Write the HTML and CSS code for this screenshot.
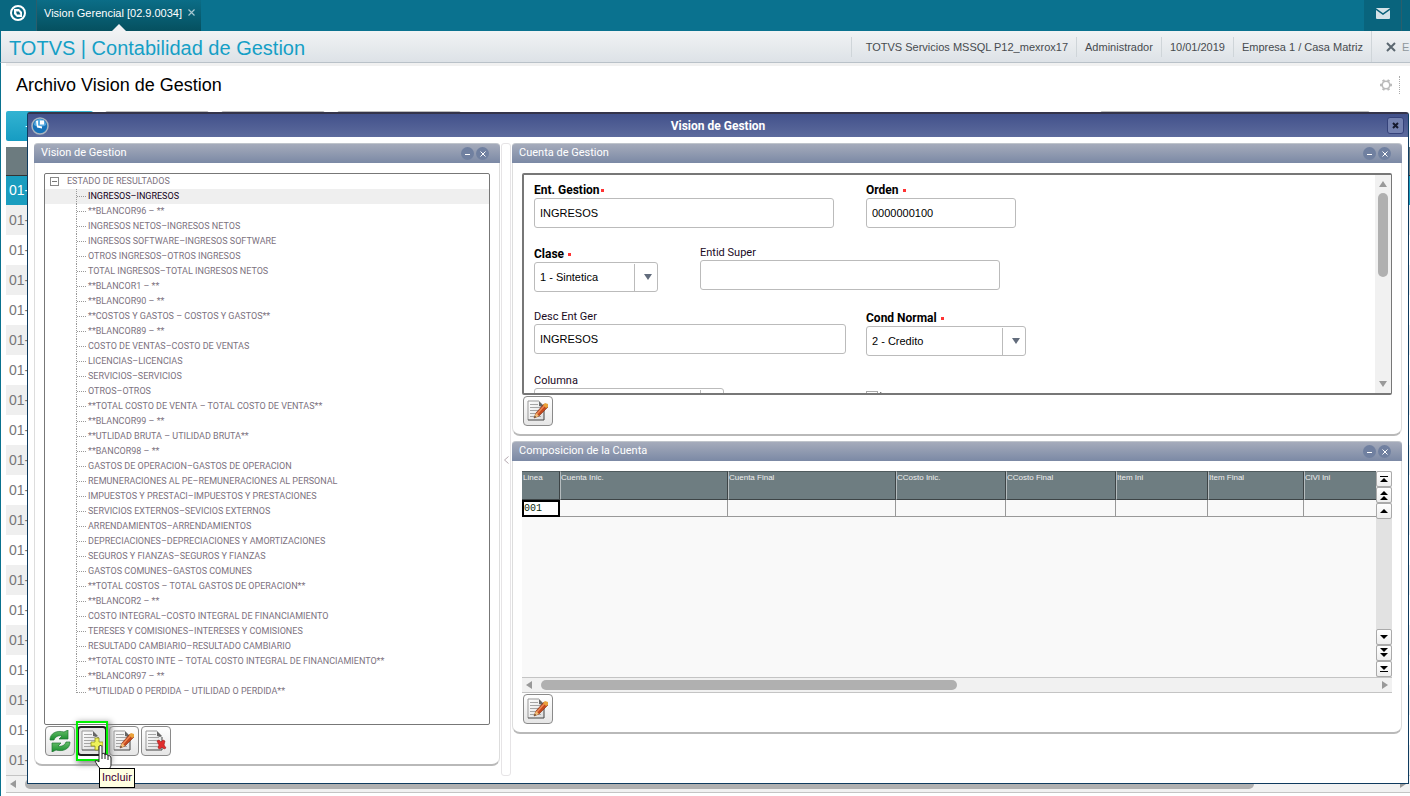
FILE: index.html
```html
<!DOCTYPE html>
<html lang="es">
<head>
  <meta charset="utf-8">
  <title>Vision Gerencial</title>
  <link rel="stylesheet" href="styles.css">
</head>
<body>

  <!-- shared icons -->
  <svg class="defs" width="0" height="0" aria-hidden="true">
    <defs>
      <linearGradient id="paper" x1="0" y1="0" x2="1" y2="1">
        <stop offset="0" stop-color="#fff"/><stop offset="1" stop-color="#dcdcdc"/>
      </linearGradient>
      <linearGradient id="leaf" x1="0" y1="0" x2="0" y2="1">
        <stop offset="0" stop-color="#67c06a"/><stop offset="1" stop-color="#168c2c"/>
      </linearGradient>
      <symbol id="doc" viewBox="0 0 22 22">
        <path d="M1 1h11l5 5v14H1z" fill="url(#paper)"/>
        <path d="M1 20V1h11" fill="none" stroke="#999"/>
        <path d="M1 20h16V7" fill="none" stroke="#444"/>
        <path d="M12 1l5 5-2 1-3-1z" fill="#666"/>
        <path d="M3 4.500h8M3 7.500h11M3 10.500h11M3 13.500h11M3 16.500h11" stroke="#a5a5a5"/>
      </symbol>
      <symbol id="edit" viewBox="0 0 22 22">
        <use href="#doc"/>
        <path d="M7 18l2-5 8-9 4 3-9 9z" fill="#c4481d" stroke="#7c2d12" stroke-width=".6"/>
        <path d="M9 14l8-9 1 1-8 9z" fill="#ee8a55"/>
        <path d="M16 5l2-2 3 1v3l-2 1z" fill="#e9a23b"/>
        <path d="M7 18l2-5 3 3z" fill="#f2c078"/>
        <path d="M7 18l1-2 1 1z" fill="#222"/>
      </symbol>
    </defs>
  </svg>

  <div class="topbar">
    <a class="home" href="#" aria-label="Inicio">
      <svg width="18" height="18" viewBox="0 0 18 18">
        <circle cx="9" cy="9" r="7" fill="none" stroke="#fff" stroke-width="2"/>
        <path d="M5 5h5l3 3v5H8l-3-3z" fill="#fff"/>
        <path d="M7 7.500h3l1.500 3H8z" fill="#0b5d74"/>
      </svg>
    </a>
    <div class="app-tab">
      <span>Vision Gerencial [02.9.0034]</span>
      <button class="tab-close" aria-label="Cerrar">
        <svg width="7" height="7" viewBox="0 0 7 7"><path d="M.5.500l6 6M6.500.500l-6 6" stroke="#a9c8d1" stroke-width="1.200"/></svg>
      </button>
    </div>
    <a class="mail" href="#" aria-label="Mensajes">
      <svg width="14" height="11" viewBox="0 0 14 11">
        <rect width="14" height="11" rx="1" fill="#d5e2e8"/>
        <path d="M0 1l7 5 7-5" fill="none" stroke="#0a6079" stroke-width="1.500"/>
      </svg>
    </a>
    <span class="bar-end"></span>
  </div>

  <div class="header">
    <h1>TOTVS | Contabilidad de Gestion</h1>
    <ul class="session">
      <li>TOTVS Servicios MSSQL P12_mexrox17</li>
      <li>Administrador</li>
      <li>10/01/2019</li>
      <li>Empresa 1 / Casa Matriz</li>
    </ul>
    <button class="exit">
      <svg width="10" height="10" viewBox="0 0 10 10"><path d="M1 1l8 8M9 1l-8 8" stroke="#5b6770" stroke-width="2"/></svg>
      <span>E</span>
    </button>
  </div>

  <div class="page">
    <div class="page-title">
      <h2>Archivo Vision de Gestion</h2>
      <button class="gear" aria-label="Configurar">
        <svg width="12" height="12" viewBox="0 0 12 12">
          <circle cx="6" cy="6" r="3.800" fill="none" stroke="#bbb" stroke-width="1.600"/>
          <path d="M10 6h2M8 9.500l1 1.700M4 9.500l-1 1.700M2 6H0M4 2.500L3 .8M8 2.500L9 .8" stroke="#bbb" stroke-width="2.400"/>
        </svg>
      </button>
    </div>

    <div class="actions">
      <button class="action primary">+</button>
      <button class="action" aria-label="Modificar"></button>
      <button class="action" aria-label="Visualizar"></button>
      <button class="action wide" aria-label="Otras acciones"></button>
      <button class="action search" aria-label="Buscar"></button>
    </div>

    <table class="records">
      <thead><tr><th></th></tr></thead>
      <tbody>
        <tr class="selected"><td>01-</td></tr>
        <tr><td>01-</td></tr>
        <tr><td>01-</td></tr>
        <tr><td>01-</td></tr>
        <tr><td>01-</td></tr>
        <tr><td>01-</td></tr>
        <tr><td>01-</td></tr>
        <tr><td>01-</td></tr>
        <tr><td>01-</td></tr>
        <tr><td>01-</td></tr>
        <tr><td>01-</td></tr>
        <tr><td>01-</td></tr>
        <tr><td>01-</td></tr>
        <tr><td>01-</td></tr>
        <tr><td>01-</td></tr>
        <tr><td>01-</td></tr>
        <tr><td>01-</td></tr>
        <tr><td>01-</td></tr>
        <tr><td>01-</td></tr>
        <tr><td>01-</td></tr>
      </tbody>
    </table>
    <div class="hscroll page-scroll">
      <i class="arrow left"></i><div class="track"><div class="thumb"></div></div><i class="arrow right"></i>
    </div>
  </div>

  <div class="window">
    <div class="titlebar">
      <svg class="logo" width="18" height="18" viewBox="0 0 18 18">
        <circle cx="9" cy="9" r="8" fill="#1672b8" stroke="#a9b4c0" stroke-width="1.500"/>
        <path d="M3 8a6 6 0 0 1 12 0c-3 2-9 2-12 0z" fill="#58abe0"/>
        <path d="M5 4l2-.5v5l4 1v2l-5-1zM9 3.500h4v4H9z" fill="#fff"/>
      </svg>
      <h2>Vision de Gestion</h2>
      <button class="win-close" aria-label="Cerrar">
        <svg width="7" height="7" viewBox="0 0 7 7"><path d="M1 1l5 5M6 1L1 6" stroke="#15192e" stroke-width="2"/></svg>
      </button>
    </div>

    <div class="window-body">
      <section class="panel tree-panel">
        <div class="panel-head">
          <h3>Vision de Gestion</h3>
          <button class="round" aria-label="Minimizar"><svg width="6" height="6" viewBox="0 0 6 6"><path d="M0 3.500h5" stroke="#fff"/></svg></button>
          <button class="round" aria-label="Cerrar"><svg width="6" height="6" viewBox="0 0 6 6"><path d="M.5.500l5 5M5.500.500l-5 5" stroke="#fff"/></svg></button>
        </div>
        <div class="panel-body">
          <div class="tree">
            <div class="root"><button class="toggle" aria-label="Contraer"></button>ESTADO DE RESULTADOS</div>
            <ul>
              <li class="current">INGRESOS–INGRESOS</li>
              <li>**BLANCOR96 – **</li>
              <li>INGRESOS NETOS–INGRESOS NETOS</li>
              <li>INGRESOS SOFTWARE–INGRESOS SOFTWARE</li>
              <li>OTROS INGRESOS–OTROS INGRESOS</li>
              <li>TOTAL INGRESOS–TOTAL INGRESOS NETOS</li>
              <li>**BLANCOR1 – **</li>
              <li>**BLANCOR90 – **</li>
              <li>**COSTOS Y GASTOS – COSTOS Y GASTOS**</li>
              <li>**BLANCOR89 – **</li>
              <li>COSTO DE VENTAS–COSTO DE VENTAS</li>
              <li>LICENCIAS–LICENCIAS</li>
              <li>SERVICIOS–SERVICIOS</li>
              <li>OTROS–OTROS</li>
              <li>**TOTAL COSTO DE VENTA – TOTAL COSTO DE VENTAS**</li>
              <li>**BLANCOR99 – **</li>
              <li>**UTLIDAD BRUTA – UTILIDAD BRUTA**</li>
              <li>**BANCOR98 – **</li>
              <li>GASTOS DE OPERACION–GASTOS DE OPERACION</li>
              <li>REMUNERACIONES AL PE–REMUNERACIONES AL PERSONAL</li>
              <li>IMPUESTOS Y PRESTACI–IMPUESTOS Y PRESTACIONES</li>
              <li>SERVICIOS EXTERNOS–SEVICIOS EXTERNOS</li>
              <li>ARRENDAMIENTOS–ARRENDAMIENTOS</li>
              <li>DEPRECIACIONES–DEPRECIACIONES Y AMORTIZACIONES</li>
              <li>SEGUROS Y FIANZAS–SEGUROS Y FIANZAS</li>
              <li>GASTOS COMUNES–GASTOS COMUNES</li>
              <li>**TOTAL COSTOS – TOTAL GASTOS DE OPERACION**</li>
              <li>**BLANCOR2 – **</li>
              <li>COSTO INTEGRAL–COSTO INTEGRAL DE FINANCIAMIENTO</li>
              <li>TERESES Y COMISIONES–INTERESES Y COMISIONES</li>
              <li>RESULTADO CAMBIARIO–RESULTADO CAMBIARIO</li>
              <li>**TOTAL COSTO INTE – TOTAL COSTO INTEGRAL DE FINANCIAMIENTO**</li>
              <li>**BLANCOR97 – **</li>
              <li>**UTILIDAD O PERDIDA – UTILIDAD O PERDIDA**</li>
            </ul>
          </div>
          <div class="tools">
            <button class="tool" aria-label="Actualizar">
              <svg width="22" height="22" viewBox="0 0 22 22" fill="url(#leaf)" stroke="#1c7430" stroke-width=".7">
                <path d="M1 10C1 3 8 0 15 2l4-2v9h-9l3-3C9 5 6 7 5 10z"/>
                <path d="M21 12c0 7-7 10-14 8l-4 2v-9h9l-3 3c4 1 7-1 8-4z"/>
              </svg>
            </button>
            <button class="tool active" aria-label="Incluir">
              <svg width="22" height="22" viewBox="0 0 22 22">
                <use href="#doc"/>
                <path d="M14 8h4v4h4v4h-4v4h-4v-4h-4v-4h4z" fill="#eff25a" stroke="#8f9218" stroke-width=".8"/>
              </svg>
              <svg class="cursor" width="20" height="28" viewBox="0 0 20 28">
                <path d="M6 14V3c0-2 3-2 3 0v7c1-1 3-1 3 1 1-1 3-1 3 1 1-1 3 0 3 2v6c0 4-2 6-7 6-4 0-7-5-9-9 1-1 3 0 4 1z" fill="#fff" stroke="#222"/>
                <path d="M9 10v5M12 11v4M15 12v4" stroke="#222"/>
              </svg>
              <span class="tooltip">Incluir</span>
            </button>
            <button class="tool" aria-label="Modificar"><svg width="22" height="22"><use href="#edit"/></svg></button>
            <button class="tool" aria-label="Borrar">
              <svg width="22" height="22" viewBox="0 0 22 22">
                <use href="#doc"/>
                <path d="M12 11l2-1 2 2 2-2 2 1-1 4 2 3-2 1-2-2-2 2-2-1 1-3z" fill="#e02c2c" stroke="#a11515" stroke-width=".6"/>
              </svg>
            </button>
          </div>
        </div>
      </section>

      <div class="splitter">
        <svg width="5" height="8" viewBox="0 0 5 8"><path d="M4.500.500L.5 4l4 3.500" fill="none" stroke="#b5a9b0"/></svg>
      </div>

      <div class="side">
        <section class="panel">
          <div class="panel-head">
            <h3>Cuenta de Gestion</h3>
            <button class="round" aria-label="Minimizar"><svg width="6" height="6" viewBox="0 0 6 6"><path d="M0 3.500h5" stroke="#fff"/></svg></button>
            <button class="round" aria-label="Cerrar"><svg width="6" height="6" viewBox="0 0 6 6"><path d="M.5.500l5 5M5.500.500l-5 5" stroke="#fff"/></svg></button>
          </div>
          <div class="panel-body">
            <div class="form-box">
              <form>
                <div class="field required span2">
                  <label for="ent">Ent. Gestion<b></b></label>
                  <input class="w300" id="ent" type="text" value="INGRESOS">
                </div>
                <div class="field required">
                  <label for="orden">Orden <b></b></label>
                  <input class="w150" id="orden" type="text" value="0000000100">
                </div>
                <div class="field required">
                  <label for="clase">Clase <b></b></label>
                  <span class="select w124"><select id="clase"><option>1 - Sintetica</option></select></span>
                </div>
                <div class="field span2">
                  <label for="super">Entid Super</label>
                  <input class="w300" id="super" type="text">
                </div>
                <div class="field span2">
                  <label for="desc">Desc Ent Ger</label>
                  <input class="w312" id="desc" type="text" value="INGRESOS">
                </div>
                <div class="field required">
                  <label for="cond">Cond Normal <b></b></label>
                  <span class="select w160"><select id="cond"><option>2 - Credito</option></select></span>
                </div>
                <div class="field span2">
                  <label for="columna">Columna</label>
                  <span class="select w190"><select id="columna"><option></option></select></span>
                </div>
                <div class="field check"><input type="checkbox" aria-label="Activa" checked></div>
              </form>
              <div class="vscroll">
                <i class="arrow up"></i><div class="track"><div class="thumb"></div></div><i class="arrow down"></i>
              </div>
            </div>
            <div class="tools">
              <button class="tool" aria-label="Modificar"><svg width="22" height="22"><use href="#edit"/></svg></button>
            </div>
          </div>
        </section>

        <section class="panel">
          <div class="panel-head">
            <h3>Composicion de la Cuenta</h3>
            <button class="round" aria-label="Minimizar"><svg width="6" height="6" viewBox="0 0 6 6"><path d="M0 3.500h5" stroke="#fff"/></svg></button>
            <button class="round" aria-label="Cerrar"><svg width="6" height="6" viewBox="0 0 6 6"><path d="M.5.500l5 5M5.500.500l-5 5" stroke="#fff"/></svg></button>
          </div>
          <div class="panel-body">
            <div class="grid-box">
              <div class="grid-main">
                <div class="grid-scroll">
                  <table class="grid">
                    <colgroup>
                      <col class="c-line"><col class="c-account"><col class="c-account"><col class="c-cost"><col class="c-cost"><col class="c-item"><col class="c-item-end"><col>
                    </colgroup>
                    <thead>
                      <tr><th>Linea</th><th>Cuenta Inic.</th><th>Cuenta Final</th><th>CCosto Inic.</th><th>CCosto Final</th><th>Item Ini</th><th>Item Final</th><th>ClVl Ini</th></tr>
                    </thead>
                    <tbody>
                      <tr><td class="focus">001</td><td></td><td></td><td></td><td></td><td></td><td></td><td></td></tr>
                    </tbody>
                  </table>
                </div>
                <div class="nav">
                  <button aria-label="Primero"><svg width="8" height="7"><path d="M0 0h8v1H0zM0 6l4-4 4 4z"/></svg></button>
                  <button aria-label="Pagina anterior"><svg width="8" height="10"><path d="M0 5l4-4 4 4zM0 10l4-4 4 4z"/></svg></button>
                  <button aria-label="Anterior"><svg width="8" height="4"><path d="M0 4l4-4 4 4z"/></svg></button>
                  <span></span>
                  <button aria-label="Siguiente"><svg width="8" height="4"><path d="M0 0l4 4 4-4z"/></svg></button>
                  <button aria-label="Pagina siguiente"><svg width="8" height="10"><path d="M0 0l4 4 4-4zM0 5l4 4 4-4z"/></svg></button>
                  <button aria-label="Ultimo"><svg width="8" height="7"><path d="M0 0l4 4 4-4zM0 5h8v1H0z"/></svg></button>
                </div>
              </div>
              <div class="hscroll">
                <i class="arrow left"></i><div class="track"><div class="thumb"></div></div><i class="arrow right"></i>
              </div>
            </div>
            <div class="tools">
              <button class="tool" aria-label="Modificar"><svg width="22" height="22"><use href="#edit"/></svg></button>
            </div>
          </div>
        </section>
      </div>
    </div>
  </div>

</body>
</html>
```
FILE: styles.css
```css
* {
  box-sizing: border-box;
}

body {
  position: relative;
  margin: 0;
  min-height: 100vh;
  overflow: hidden;
  background: #fff;
  font-family: "Liberation Sans", Arial, sans-serif;
  font-size: 11px;
}

h1, h2, h3, ul {
  margin: 0;
  padding: 0;
  font-weight: normal;
  list-style: none;
}

button {
  display: flex;
  align-items: center;
  justify-content: center;
  margin: 0;
  padding: 0;
  border: none;
  background: none;
  font: inherit;
  cursor: pointer;
}

.defs {
  position: absolute;
}

/* top bar */
.topbar {
  display: flex;
  height: 31px;
  background: #0a728f;
}

.home {
  display: flex;
  width: 37px;
  padding: 4px 9px;
  border-right: 1px solid #2b5e6c;
  background: #096780;
}

.app-tab {
  position: relative;
  display: flex;
  width: 164px;
  padding: 0 6px 0 7px;
  align-items: flex-start;
  justify-content: space-between;
  line-height: 26px;
  color: #fff;
  background: linear-gradient(#0b6d87, #05505f);
}

.app-tab::after {
  content: "";
  position: absolute;
  left: 75px;
  bottom: 0;
  border: 7px solid transparent;
  border-top: none;
  border-bottom-color: #f0f2f4;
}

.tab-close {
  height: 24px;
}

.mail {
  display: flex;
  width: 37px;
  height: 26px;
  margin-left: auto;
  align-items: center;
  justify-content: center;
  box-shadow: 0 5px #09647d;
  background: #09647d;
}

.bar-end {
  width: 9px;
  border-left: 1px solid #2b5e6c;
  background: #09647d;
}

/* header */
.header {
  display: flex;
  height: 32px;
  padding-left: 8px;
  align-items: center;
  border-left: 1px solid #0a728f;
  border-bottom: 1px solid #b9c1c8;
  background: linear-gradient(#f1f3f4, #dde2e7);
  color: #474b4f;
}

.header h1 {
  flex: 1;
  color: #159fc6;
  font-size: 20px;
  line-height: 24px;
  padding-top: 2px;
}

.session {
  display: flex;
}

.session li {
  padding: 0 8px;
  line-height: 20px;
  border-left: 1px solid #cfd5d9;
}

.session li:first-child {
  padding-left: 14px;
}

.exit {
  gap: 6px;
  height: 31px;
  width: 39px;
  padding-left: 14px;
  justify-content: flex-start;
  border-left: 1px solid #cfd5d9;
  color: #8f979d;
}

.exit svg {
  flex: none;
}

/* page behind the window */
.page {
  display: flex;
  flex-direction: column;
  min-height: calc(100vh - 63px);
  padding-left: 5px;
  border-left: 1px solid #0a728f;
}

.page-title {
  display: flex;
  height: 48px;
  padding: 0 10px 7px;
  align-items: center;
  justify-content: space-between;
  border-top: 3px solid #f1f1f1;
}

.page-title h2 {
  font-size: 18px;
}

.gear {
  width: 20px;
  height: 18px;
  justify-content: flex-start;
  border-right: 1px dotted #aaa;
}

.actions {
  display: flex;
  gap: 12px;
  height: 36px;
}

.action {
  width: 104px;
  height: 30px;
  border: 1px solid #bbb;
  border-radius: 2px;
}

.action.primary {
  width: 87px;
  padding-left: 19px;
  justify-content: flex-start;
  border: none;
  color: #fff;
  background: linear-gradient(#33b3d2, #169cc2);
}

.action.wide {
  width: 124px;
}

.action.search {
  width: 270px;
  margin: 0 40px 0 auto;
}

.records {
  width: 100%;
  border-collapse: collapse;
  color: #777;
  font-size: 14px;
}

.records th {
  height: 28px;
  padding: 0;
  border-bottom: 1px solid #333;
  background: #6c7b7f;
}

.records td {
  height: 30px;
  padding: 0 3px;
}

.records tr:nth-child(even) {
  background: #efefef;
}

.records .selected {
  color: #fff;
  background: #1a9dbf;
}

/* scroll bars */
.hscroll {
  display: flex;
  height: 16px;
  padding: 0 4px;
  align-items: center;
  border-top: 1px solid #c4c4c4;
  border-bottom: 1px solid #c4c4c4;
  background: #f1f1f1;
}

.track {
  flex: 1;
}

.hscroll .track {
  margin: 0 9px;
}

.hscroll .thumb {
  width: 50%;
  height: 10px;
  border-radius: 5px;
  background: #b0b0b0;
}

.page-scroll {
  height: 18px;
}

.page-scroll .thumb {
  width: 90%;
}

.arrow {
  width: 0;
  height: 0;
  border: 4px solid transparent;
}

.arrow.left {
  border-left: none;
  border-right: 6px solid #999;
}

.arrow.right {
  border-right: none;
  border-left: 6px solid #999;
}

.arrow.up {
  border-top: none;
  border-bottom: 6px solid #999;
}

.arrow.down {
  border-bottom: none;
  border-top: 6px solid #999;
}

.vscroll {
  display: flex;
  flex-direction: column;
  width: 16px;
  padding: 6px 0;
  align-items: center;
  background: #f1f1f1;
}

.vscroll .track {
  padding: 6px 0;
}

.vscroll .thumb {
  width: 10px;
  height: 46%;
  border-radius: 5px;
  background: #b0b0b0;
}

/* window */
.window {
  position: absolute;
  top: 112px;
  right: 1px;
  bottom: 12px;
  left: 27px;
  display: flex;
  flex-direction: column;
  border: 1px solid #0f3b5f;
  border-top: 2px solid #34344a;
  border-radius: 3px 3px 0 0;
  background: #fff;
  font-family: Roboto, "Liberation Sans", sans-serif;
}

.titlebar {
  display: flex;
  height: 23px;
  padding: 0 4px 0 3px;
  align-items: center;
  background: linear-gradient(#42518b, #5d6b9d);
}

.titlebar h2 {
  flex: 1;
  color: #fff;
  font-size: 12px;
  font-weight: bold;
  text-align: center;
}

.win-close {
  width: 17px;
  height: 17px;
  border: 1px solid #35427a;
  border-radius: 3px;
  background: #7481b0;
}

.window-body {
  display: grid;
  grid-template-columns: 466fr 10px 890fr;
  column-gap: 1px;
  flex: 1;
  padding: 6px 6px 7px;
}

.panel {
  display: flex;
  flex-direction: column;
  min-width: 0;
  min-height: 0;
  border: 1px solid #ddd;
  border-top: none;
  border-bottom: 2px solid #b9b9b9;
  border-radius: 4px 4px 8px 8px;
  background: #fff;
}

.tree-panel {
  margin-bottom: 10px;
}

.panel-head {
  display: flex;
  gap: 2px;
  height: 20px;
  margin: 0 -1px;
  padding: 0 11px 0 7px;
  align-items: center;
  border-top: 1px solid #bfc4cb;
  border-radius: 4px 4px 0 0;
  background: linear-gradient(#a5abbb, #7b89a5);
}

.panel-head h3 {
  flex: 1;
  color: #fff;
  font-size: 11px;
  line-height: 15px;
  padding-bottom: 2px;
}

.round {
  width: 13px;
  height: 13px;
  border-radius: 50%;
  background: #7080a0;
}

.panel-body {
  display: flex;
  flex: 1;
  flex-direction: column;
  min-height: 0;
  padding: 10px 9px 8px;
}

.splitter {
  display: flex;
  align-items: center;
  justify-content: center;
  border: 1px solid #e6e4e6;
  border-radius: 3px;
}

.side {
  display: grid;
  grid-template-rows: 1fr 1fr;
  row-gap: 5px;
  min-width: 0;
  padding-bottom: 42px;
}

/* tree */
.tree {
  flex: 1;
  border: 1px solid #777;
  border-radius: 2px;
  color: #7c7280;
  font-size: 9px;
  line-height: 15px;
}

.root {
  display: flex;
  gap: 8px;
  padding-left: 5px;
  align-items: center;
}

.toggle {
  width: 9px;
  height: 9px;
  border: 1px solid #888;
}

.toggle::before {
  content: "";
  width: 5px;
  height: 1px;
  background: #777;
}

.tree li {
  display: flex;
  gap: 2px;
  height: 15px;
  padding-left: 31px;
  white-space: nowrap;
}

.tree li::before {
  content: "";
  width: 9px;
  height: 8px;
  border-left: 1px dotted #999;
  border-bottom: 1px dotted #999;
}

.tree li:not(:last-child)::before {
  height: 15px;
  border-bottom: none;
  background: repeating-linear-gradient(90deg, #999 0 1px, transparent 1px 2px) 0 7px / 9px 1px no-repeat;
}

.tree .current {
  color: #12001a;
  background: #efefef;
}

/* tool buttons */
.tools {
  display: flex;
  gap: 2px;
  padding: 1px 1px 0;
}

.tool {
  position: relative;
  width: 30px;
  height: 30px;
  border: 1px solid #8a8a8a;
  border-radius: 4px;
  background: linear-gradient(#fff, #e6e6e6);
}

.tool.active {
  z-index: 1;
  border: 2px solid #222;
  background: #e4e4e4;
}

.tool.active::after {
  content: "";
  position: absolute;
  inset: -7px -3px;
  border: 2px solid #00f000;
  box-shadow: 2px 2px 6px 1px #888;
}

.cursor {
  position: absolute;
  top: 16px;
  left: 14px;
  z-index: 1;
}

.tooltip {
  position: absolute;
  top: 40px;
  left: 20px;
  z-index: 2;
  padding: 0 2px;
  border: 1px solid #000;
  background: #ffffe1;
  color: #420038;
  line-height: 18px;
}

/* form */
.form-box {
  display: flex;
  flex: 1;
  min-height: 0;
  overflow: hidden;
  border: 2px solid #777;
  border-right-width: 1px;
  border-radius: 2px;
}

form {
  display: grid;
  flex: 1;
  grid-template-columns: 166px 166px 1fr;
  grid-auto-rows: 64px;
  padding: 5px 10px;
  height: 0;
}

.span2 {
  grid-column: span 2;
}

.field label {
  display: block;
  height: 16px;
  color: #1a0a1e;
  line-height: 18px;
}

.field.required label {
  height: 18px;
  line-height: 20px;
  color: #000;
  font-size: 12px;
  font-weight: bold;
}

.field label b {
  display: inline-block;
  width: 3px;
  height: 3px;
  margin: 0 1px 2px;
  background: #f33;
}

.field input[type="text"],
.select {
  height: 30px;
  padding: 0 5px;
  border: 1px solid #bbb;
  border-radius: 3px;
  background: #fff;
  color: #000;
  font: 11px "Liberation Sans", Arial, sans-serif;
}

.select {
  position: relative;
  display: block;
}

.select select {
  width: 100%;
  height: 28px;
  padding: 0;
  border: none;
  appearance: none;
  background: none;
  color: #000;
  font: inherit;
}

.select::before {
  content: "";
  position: absolute;
  top: 1px;
  right: 22px;
  bottom: 0;
  border-left: 1px solid #bbb;
}

.select::after {
  content: "";
  position: absolute;
  top: 11px;
  right: 5px;
  border: 4px solid transparent;
  border-top: 6px solid #626c7c;
  border-bottom: none;
}

.w124 { width: 124px; }
.w150 { width: 150px; }
.w160 { width: 160px; }
.w190 { width: 190px; }
.w300 { width: 300px; }
.w312 { width: 312px; }

.check {
  padding-top: 19px;
}

.check input {
  position: relative;
  width: 12px;
  height: 12px;
  margin: 0;
  border: 1px solid #aaa;
  appearance: none;
}

.check input::after {
  content: "";
  position: absolute;
  right: -2px;
  top: -2px;
  width: 4px;
  height: 10px;
  border: solid #444;
  border-width: 0 2px 2px 0;
  transform: rotate(40deg);
}

/* grid */
.grid-box {
  display: flex;
  flex: 1;
  flex-direction: column;
  min-height: 0;
}

.grid-main {
  display: flex;
  flex: 1;
  background: #f9f9f9;
}

.grid-scroll {
  flex: 1;
  min-width: 0;
}

.grid {
  width: 100%;
  table-layout: fixed;
  border-collapse: separate;
  border-spacing: 0;
}

.grid th {
  height: 29px;
  padding: 0 1px;
  border-top: 1px solid #4f5b5e;
  border-right: 1px solid #3d4446;
  border-bottom: 1px solid #3d4446;
  background: #6e7d81;
  color: #eee;
  font: 8px/11px "Liberation Sans", Arial, sans-serif;
  text-align: left;
  vertical-align: top;
}

.grid th + th {
  padding-left: 0;
  border-left: 1px solid #b5bcbe;
}

.grid td {
  height: 17px;
  padding: 0;
  border-right: 1px solid #999;
  border-bottom: 1px solid #999;
}

.grid th:last-child,
.grid td:last-child {
  border-right: none;
}

.grid .focus {
  border: 2px solid #000;
  background: #fff;
  color: #0a2a0a;
  font: 10px/13px "Liberation Mono", monospace;
}

.c-line { width: 38px; }
.c-account { width: 168px; }
.c-cost { width: 110px; }
.c-item { width: 92px; }
.c-item-end { width: 96px; }

.nav {
  display: flex;
  flex-direction: column;
  width: 16px;
  background: #e2e2e2;
}

.nav span {
  flex: 1;
}

.nav button {
  height: 16px;
  border: 1px solid #aaa;
  border-radius: 2px;
  background: linear-gradient(#fff, #eee);
}
```
